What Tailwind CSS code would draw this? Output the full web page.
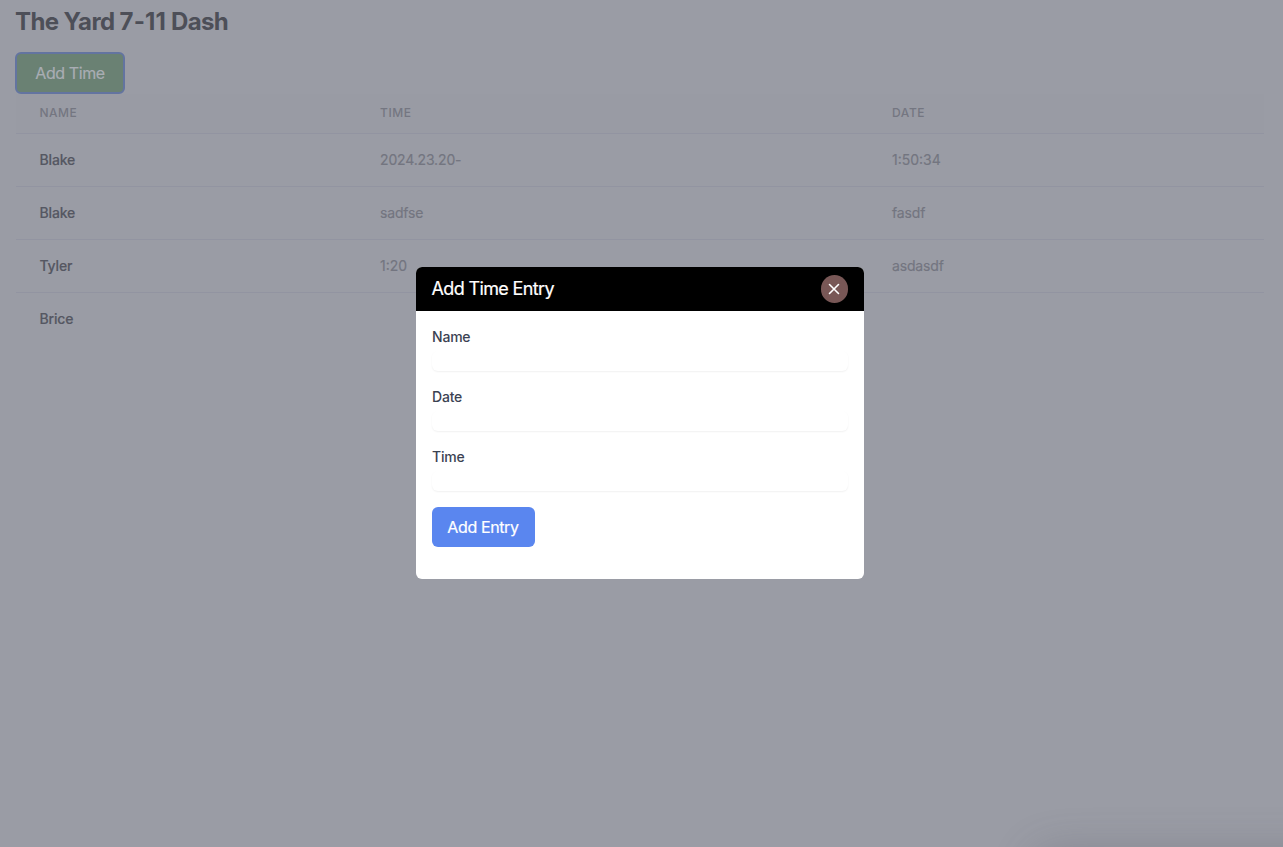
<!DOCTYPE html>
<html lang="en">
<head>
<meta charset="utf-8">
<title>The Yard 7-11 Dash</title>
<script src="https://cdn.jsdelivr.net/npm/@tailwindcss/browser@4"></script>
</head>
<body class="h-screen overflow-hidden bg-[#9a9ca5] font-['Inter',sans-serif] relative">
<main class="pl-[15px] pr-[19px] pt-[6px]">
  <h1 class="text-2xl font-bold leading-8 tracking-[-0.6px] text-[#4d4f58]">The Yard <span class="tracking-[0.1px]">7-11</span> Dash</h1>
  <button class="mt-[14px] flex h-[42px] w-[110px] items-center justify-center rounded-md border-2 border-[#6374a0] bg-[#6a8173] text-base text-[#a9adb4] [-webkit-text-stroke:0.2px_#a9adb4]"><span class="tracking-[-0.42px]">Add Time</span></button>
  <table class="ml-px w-[1248px] table-fixed border-collapse text-left text-sm">
    <colgroup><col class="w-[340px]"><col class="w-[512px]"><col></colgroup>
    <thead class="bg-[#999ba4] text-xs text-[#747681]">
      <tr class="h-[39px] border-b border-[#9294a1] uppercase">
        <th class="pl-[23.5px] font-medium tracking-[0.52px]">Name</th>
        <th class="pl-6 font-medium tracking-[0.6px]">Time</th>
        <th class="pl-6 font-medium tracking-[0.6px]">Date</th>
      </tr>
    </thead>
    <tbody class="text-[#737580] [-webkit-text-stroke:0.15px_currentColor]">
      <tr class="h-[53px] border-b border-[#9294a1]"><td class="pl-[23.5px] font-medium tracking-[-0.15px] text-[#555762]">Blake</td><td class="pl-6 tracking-[-0.15px]">2024.23.20-</td><td class="pl-6">1:50:34</td></tr>
      <tr class="h-[53px] border-b border-[#9294a1]"><td class="pl-[23.5px] font-medium tracking-[-0.15px] text-[#555762]">Blake</td><td class="pl-6 tracking-[-0.15px]">sadfse</td><td class="pl-6 tracking-[-0.15px]">fasdf</td></tr>
      <tr class="h-[53px] border-b border-[#9294a1]"><td class="pl-[23.5px] font-medium tracking-[-0.15px] text-[#555762]">Tyler</td><td class="pl-6">1:20</td><td class="pl-6 tracking-[-0.15px]">asdasdf</td></tr>
      <tr class="h-[53px]"><td class="pl-[23.5px] font-medium tracking-[-0.15px] text-[#555762]">Brice</td><td></td><td></td></tr>
    </tbody>
  </table>
</main>

<!-- Soft shadow in the lower right corner -->
<div class="absolute bottom-0 right-0 h-[60px] w-[300px] overflow-hidden">
  <div class="ml-[60px] mt-[74px] h-20 w-[400px] rounded-xl shadow-[0_0_44px_8px_rgba(80,80,92,0.32)]"></div>
</div>

<!-- Add time dialog -->
<section class="absolute left-[416px] top-[267px] h-[312px] w-[448px] overflow-hidden rounded-md bg-white">
  <header class="flex h-11 items-center justify-between bg-black px-4">
    <h2 class="-ml-[0.5px] text-lg tracking-[-0.64px] text-white [-webkit-text-stroke:0.2px_white]">Add Time Entry</h2>
    <button class="flex h-7 w-[27px] items-center justify-center rounded-full bg-[#785756] pr-px" aria-label="Close">
      <svg class="h-3 w-3" viewBox="0 0 12 12" fill="none" stroke="#fff" stroke-width="1.6" stroke-linecap="round"><path d="M1.5 1.5l9 9M10.5 1.5l-9 9"/></svg>
    </button>
  </header>
  <form class="p-4 text-sm font-medium tracking-[-0.2px] text-[#3b4252]">
    <label class="mb-4 block leading-5">Name<input class="mt-1 block h-5 w-full rounded-md bg-white shadow-[0_1px_2px_0_rgba(0,0,0,0.06)]"></label>
    <label class="mb-4 block leading-5">Date<input class="mt-1 block h-5 w-full rounded-md bg-white shadow-[0_1px_2px_0_rgba(0,0,0,0.06)]"></label>
    <label class="mb-4 block leading-5">Time<input class="mt-1 block h-5 w-full rounded-md bg-white shadow-[0_1px_2px_0_rgba(0,0,0,0.06)]"></label>
    <button type="button" class="flex h-10 w-[103px] items-center justify-center rounded-md bg-[#5a86ef] pr-px text-base font-normal tracking-[-0.38px] text-white [-webkit-text-stroke:0.2px_white]">Add Entry</button>
  </form>
</section>
</body>
</html>
